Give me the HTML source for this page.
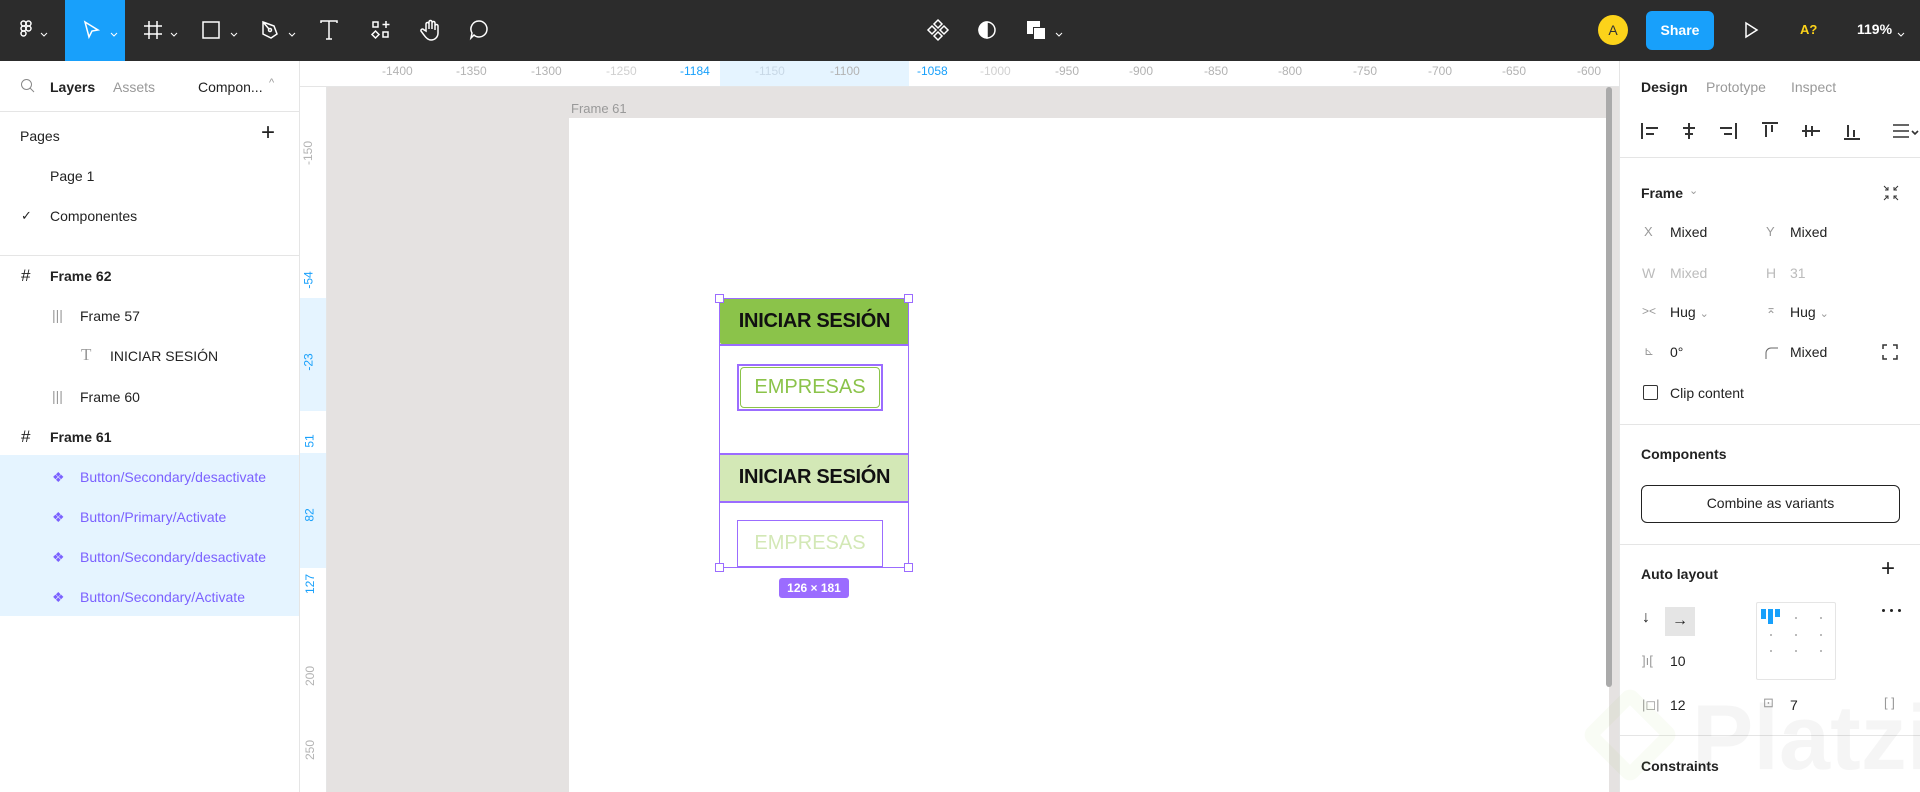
<!DOCTYPE html>
<html><head><meta charset="utf-8"><style>
*{margin:0;padding:0;box-sizing:border-box}
body{width:1920px;height:792px;overflow:hidden;position:relative;background:#e5e2e1;font-family:"Liberation Sans",sans-serif;color:#222}
.a{position:absolute;white-space:nowrap}
#top{left:0;top:0;width:1920px;height:61px;background:#2c2c2c}
.ic{position:absolute;top:18px;width:24px;height:24px}
.ic svg{width:24px;height:24px;stroke:#fff;fill:none;stroke-width:1.5}
.car{position:absolute;top:26px;width:8px;height:8px}
#left{left:0;top:61px;width:300px;height:731px;background:#fff;border-right:1px solid #e5e5e5}
#right{left:1619px;top:61px;width:301px;height:731px;background:#fff;border-left:1px solid #e5e5e5}
.t{font-size:14px}
.hr{position:absolute;height:1px;background:#e5e5e5}
.rl{font-size:12px;color:#b3b3b3}
.g{color:#999}
.dot{position:absolute;width:2px;height:2px;background:#bbb}
</style></head><body>
<div class="a" id="top">
 <div class="ic" style="left:14px"><svg viewBox="0 0 24 24"><rect x="7" y="3" width="5" height="5" rx="2.5"/><rect x="12" y="3" width="5" height="5" rx="2.5"/><rect x="7" y="8" width="5" height="5" rx="2.5"/><circle cx="14.5" cy="10.5" r="2.5"/><rect x="7" y="13" width="5" height="5" rx="2.5"/></svg></div>
 <div class="car" style="left:40px"><svg width="8" height="8"><path d="M1 2l3 3 3-3" stroke="#fff" fill="none"/></svg></div>
 <div class="a" style="left:65px;top:0;width:60px;height:61px;background:#18a0fb"></div>
 <div class="ic" style="left:79px"><svg viewBox="0 0 24 24"><path d="M6 4l13 8-6 1-3 6z"/></svg></div>
 <div class="car" style="left:110px"><svg width="8" height="8"><path d="M1 2l3 3 3-3" stroke="#fff" fill="none"/></svg></div>
 <div class="ic" style="left:141px"><svg viewBox="0 0 24 24"><path d="M8 3v18M16 3v18M3 8h18M3 16h18"/></svg></div>
 <div class="car" style="left:170px"><svg width="8" height="8"><path d="M1 2l3 3 3-3" stroke="#fff" fill="none"/></svg></div>
 <div class="ic" style="left:199px"><svg viewBox="0 0 24 24"><rect x="4" y="4" width="16" height="16"/></svg></div>
 <div class="car" style="left:230px"><svg width="8" height="8"><path d="M1 2l3 3 3-3" stroke="#fff" fill="none"/></svg></div>
 <div class="ic" style="left:258px"><svg viewBox="0 0 24 24"><path d="M5 4l11 4 3 8-6 4-8-4zM5 4l6 7"/><circle cx="12" cy="12" r="1.5"/></svg></div>
 <div class="car" style="left:288px"><svg width="8" height="8"><path d="M1 2l3 3 3-3" stroke="#fff" fill="none"/></svg></div>
 <div class="ic" style="left:317px"><svg viewBox="0 0 24 24"><path d="M4 5V3h16v2M12 3v18M9 21h6"/></svg></div>
 <div class="ic" style="left:369px"><svg viewBox="0 0 24 24"><rect x="4" y="4" width="5" height="5"/><path d="M17 3v7M13.5 6.5h7M6.5 13l3.5 3.5-3.5 3.5-3.5-3.5z"/><rect x="14" y="14" width="5" height="5"/></svg></div>
 <div class="ic" style="left:418px"><svg viewBox="0 0 24 24"><path d="M8 13V6a1.5 1.5 0 013 0v5V4a1.5 1.5 0 013 0v7V5a1.5 1.5 0 013 0v7V8a1.5 1.5 0 013 0v7c0 4-3 7-7 7-3 0-5-2-7-5l-3-4a1.5 1.5 0 012.5-1.5z"/></svg></div>
 <div class="ic" style="left:467px"><svg viewBox="0 0 24 24"><path d="M12 3a8 8 0 110 16c-2 0-4-1-5-2l-3 3 1-5a8 8 0 017-12z"/></svg></div>
 <div class="ic" style="left:926px"><svg viewBox="0 0 24 24"><path d="M12 2l4 4-4 4-4-4zM12 14l4 4-4 4-4-4zM6 8l4 4-4 4-4-4zM18 8l4 4-4 4-4-4z"/></svg></div>
 <div class="ic" style="left:975px"><svg viewBox="0 0 24 24"><circle cx="12" cy="12" r="8"/><path d="M12 4a8 8 0 000 16z" fill="#fff"/></svg></div>
 <div class="a" style="left:1027px;top:21px;width:13px;height:13px;background:#fff"></div>
 <div class="a" style="left:1033px;top:27px;width:13px;height:13px;background:#fff;border:1.5px solid #2c2c2c"></div>
 <div class="car" style="left:1055px"><svg width="8" height="8"><path d="M1 2l3 3 3-3" stroke="#fff" fill="none"/></svg></div>
 <div class="a" style="left:1598px;top:15px;width:30px;height:30px;border-radius:50%;background:#fcd31a;font-size:14px;text-align:center;line-height:30px;color:#333">A</div>
 <div class="a" style="left:1646px;top:11px;width:68px;height:39px;border-radius:6px;background:#18a0fb;color:#fff;font-size:14px;font-weight:bold;text-align:center;line-height:39px">Share</div>
 <div class="ic" style="left:1739px"><svg viewBox="0 0 24 24"><path d="M7 5l11 7-11 7z"/></svg></div>
 <div class="a" style="left:1800px;top:22px;font-size:13px;color:#fcd31a;font-weight:bold">A?</div>
 <div class="a" style="left:1857px;top:21px;font-size:14px;color:#fff;font-weight:bold">119%</div>
 <div class="car" style="left:1897px"><svg width="8" height="8"><path d="M1 2l3 3 3-3" stroke="#fff" fill="none"/></svg></div>
</div>

<div class="a" style="left:300px;top:61px;width:1319px;height:26px;background:#fff;border-bottom:1px solid #e5e5e5"></div>
<div class="a" style="left:720px;top:61px;width:189px;height:25px;background:#e5f4ff"></div>
<div class="a rl" style="left:382px;top:64px">-1400</div>
<div class="a rl" style="left:456px;top:64px">-1350</div>
<div class="a rl" style="left:531px;top:64px">-1300</div>
<div class="a rl" style="left:606px;top:64px;color:#d0d0d0">-1250</div>
<div class="a rl" style="left:680px;top:64px;color:#18a0fb">-1184</div>
<div class="a rl" style="left:755px;top:64px;color:#c8d8e6">-1150</div>
<div class="a rl" style="left:830px;top:64px">-1100</div>
<div class="a rl" style="left:917px;top:64px;color:#18a0fb">-1058</div>
<div class="a rl" style="left:980px;top:64px;color:#d0d0d0">-1000</div>
<div class="a rl" style="left:1055px;top:64px">-950</div>
<div class="a rl" style="left:1129px;top:64px">-900</div>
<div class="a rl" style="left:1204px;top:64px">-850</div>
<div class="a rl" style="left:1278px;top:64px">-800</div>
<div class="a rl" style="left:1353px;top:64px">-750</div>
<div class="a rl" style="left:1428px;top:64px">-700</div>
<div class="a rl" style="left:1502px;top:64px">-650</div>
<div class="a rl" style="left:1577px;top:64px">-600</div>
<div class="a" style="left:300px;top:87px;width:27px;height:705px;background:#fff;border-right:1px solid #e5e5e5"></div>
<div class="a" style="left:300px;top:298px;width:26px;height:113px;background:#e5f4ff"></div>
<div class="a" style="left:300px;top:453px;width:26px;height:115px;background:#e5f4ff"></div>
<div class="a rl" style="left:296px;top:146px;transform:rotate(-90deg)">-150</div>
<div class="a rl" style="left:300px;top:273px;transform:rotate(-90deg);color:#18a0fb">-54</div>
<div class="a rl" style="left:300px;top:355px;transform:rotate(-90deg);color:#18a0fb">-23</div>
<div class="a rl" style="left:303px;top:434px;transform:rotate(-90deg);color:#18a0fb">51</div>
<div class="a rl" style="left:303px;top:508px;transform:rotate(-90deg);color:#18a0fb">82</div>
<div class="a rl" style="left:300px;top:577px;transform:rotate(-90deg);color:#18a0fb">127</div>
<div class="a rl" style="left:300px;top:669px;transform:rotate(-90deg)">200</div>
<div class="a rl" style="left:300px;top:743px;transform:rotate(-90deg)">250</div>

<div class="a" style="left:571px;top:101px;font-size:13px;color:#999">Frame 61</div>
<div class="a" style="left:569px;top:118px;width:1040px;height:674px;background:#fff"></div>
<div class="a" style="left:1606px;top:87px;width:6px;height:600px;background:#aaa;border-radius:3px"></div>
<div class="a" style="left:720px;top:298px;width:189px;height:46px;background:#8bc34a;border-radius:2px"></div>
<div class="a" style="left:720px;top:298px;width:189px;height:46px;font-size:20px;font-weight:bold;text-align:center;line-height:46px;color:#111;letter-spacing:-0.3px">INICIAR SESIÓN</div>
<div class="a" style="left:737px;top:364px;width:146px;height:47px;border:2px solid #9b6cff;padding:1px"><div style="width:100%;height:100%;border:1px solid #8bc34a;border-radius:4px;font-size:20px;color:#8bc34a;text-align:center;line-height:39px">EMPRESAS</div></div>
<div class="a" style="left:720px;top:453px;width:189px;height:48px;background:#d3e8b6"></div>
<div class="a" style="left:720px;top:453px;width:189px;height:48px;font-size:20px;font-weight:bold;text-align:center;line-height:48px;color:#111;letter-spacing:-0.3px">INICIAR SESIÓN</div>
<div class="a" style="left:737px;top:520px;width:146px;height:47px;border:1.5px solid #9b6cff;font-size:20px;color:#d3e8b6;text-align:center;line-height:44px">EMPRESAS</div>
<div class="a" style="left:719px;top:298px;width:190px;height:270px;border:1.5px solid #9b6cff"></div>
<div class="a" style="left:720px;top:344px;width:189px;height:1.5px;background:#9b6cff"></div>
<div class="a" style="left:720px;top:453px;width:189px;height:1.5px;background:#9b6cff"></div>
<div class="a" style="left:720px;top:501px;width:189px;height:1.5px;background:#9b6cff"></div>
<div class="a" style="left:715px;top:294px;width:9px;height:9px;background:#fff;border:1.5px solid #9b6cff"></div>
<div class="a" style="left:904px;top:294px;width:9px;height:9px;background:#fff;border:1.5px solid #9b6cff"></div>
<div class="a" style="left:715px;top:563px;width:9px;height:9px;background:#fff;border:1.5px solid #9b6cff"></div>
<div class="a" style="left:904px;top:563px;width:9px;height:9px;background:#fff;border:1.5px solid #9b6cff"></div>
<div class="a" style="left:779px;top:578px;width:70px;height:20px;background:#9b6cff;border-radius:3px;color:#fff;font-size:12px;font-weight:bold;text-align:center;line-height:20px">126 × 181</div>

<div class="a" id="left">
 <svg class="a" style="left:20px;top:17px" width="16" height="16"><circle cx="6.5" cy="6.5" r="5" stroke="#888" fill="none"/><path d="M10 10l4 4" stroke="#888"/></svg>
 <div class="a t" style="left:50px;top:18px;font-weight:bold">Layers</div>
 <div class="a t g" style="left:113px;top:18px">Assets</div>
 <div class="a t" style="left:198px;top:18px">Compon...</div>
 <div class="a t g" style="left:269px;top:16px;font-size:11px">^</div>
 <div class="hr" style="left:0;top:50px;width:300px"></div>
 <div class="a t" style="left:20px;top:67px;font-weight:500">Pages</div>
 <div class="a" style="left:261px;top:58px;font-size:24px;font-weight:300">+</div>
 <div class="a t" style="left:50px;top:107px">Page 1</div>
 <div class="a t" style="left:21px;top:147px;font-size:13px">✓</div>
 <div class="a t" style="left:50px;top:147px">Componentes</div>
 <div class="hr" style="left:0;top:194px;width:300px"></div>
 <div class="a t" style="left:21px;top:205px;font-size:17px">#</div>
 <div class="a t" style="left:50px;top:207px;font-weight:bold">Frame 62</div>
 <div class="a t g" style="left:52px;top:246px">|||</div>
 <div class="a t" style="left:80px;top:247px">Frame 57</div>
 <div class="a" style="left:81px;top:284px;font-size:17px;color:#999;font-family:'Liberation Serif',serif">T</div>
 <div class="a t" style="left:110px;top:287px">INICIAR SESIÓN</div>
 <div class="a t g" style="left:52px;top:327px">|||</div>
 <div class="a t" style="left:80px;top:328px">Frame 60</div>
 <div class="a t" style="left:21px;top:366px;font-size:17px">#</div>
 <div class="a t" style="left:50px;top:368px;font-weight:bold">Frame 61</div>
 <div class="a" style="left:0;top:394px;width:299px;height:161px;background:#e5f4ff"></div>
 <div class="a t" style="left:52px;top:408px;color:#7b61ff">❖</div><div class="a t" style="left:80px;top:408px;color:#7b61ff">Button/Secondary/desactivate</div>
 <div class="a t" style="left:52px;top:448px;color:#7b61ff">❖</div><div class="a t" style="left:80px;top:448px;color:#7b61ff">Button/Primary/Activate</div>
 <div class="a t" style="left:52px;top:488px;color:#7b61ff">❖</div><div class="a t" style="left:80px;top:488px;color:#7b61ff">Button/Secondary/desactivate</div>
 <div class="a t" style="left:52px;top:528px;color:#7b61ff">❖</div><div class="a t" style="left:80px;top:528px;color:#7b61ff">Button/Secondary/Activate</div>
</div>

<div class="a" id="right">
 <div class="a t" style="left:21px;top:18px;font-weight:bold">Design</div>
 <div class="a t g" style="left:86px;top:18px">Prototype</div>
 <div class="a t g" style="left:171px;top:18px">Inspect</div>
 <svg class="a" style="left:20px;top:58px" width="280" height="24" stroke="#333" stroke-width="2" fill="none">
  <path d="M2 4v16M6 9h12M6 15h8"/>
  <path d="M49 4v16M43 9h12M45 15h8"/>
  <path d="M96 4v16M80 9h12M84 15h8"/>
  <path d="M122 4h16M126 6v12M132 6v7"/>
  <path d="M162 12h18M166 6v12M172 7v10"/>
  <path d="M204 20h16M208 6v12M214 11v7"/>
  <path d="M253 6h16M253 12h16M253 18h16M272 12l3 3 3-3" stroke-width="1.6"/>
 </svg>
 <div class="hr" style="left:0;top:96px;width:301px"></div>
 <div class="a t" style="left:21px;top:124px;font-weight:bold">Frame</div>
 <div class="a g" style="left:69px;top:123px;font-size:11px">⌄</div>
 <svg class="a" style="left:262px;top:123px" width="18" height="18" stroke="#333" fill="none"><path d="M2 2l4 4M6 3v3H3M16 2l-4 4M12 3v3h3M2 16l4-4M3 12h3v3M16 16l-4-4M15 12h-3v3"/></svg>
 <div class="a t g" style="left:24px;top:163px;font-size:13px">X</div><div class="a t" style="left:50px;top:163px">Mixed</div>
 <div class="a t g" style="left:146px;top:163px;font-size:13px">Y</div><div class="a t" style="left:170px;top:163px">Mixed</div>
 <div class="a t" style="left:22px;top:204px;color:#bbb">W</div><div class="a t" style="left:50px;top:204px;color:#bbb">Mixed</div>
 <div class="a t" style="left:146px;top:204px;color:#bbb">H</div><div class="a t" style="left:170px;top:204px;color:#bbb">31</div>
 <div class="a t g" style="left:22px;top:243px;font-size:12px">&gt;&lt;</div><div class="a t" style="left:50px;top:243px">Hug <span class="g" style="font-size:11px">⌄</span></div>
 <div class="a t g" style="left:146px;top:241px;font-size:12px">⌅</div><div class="a t" style="left:170px;top:243px">Hug <span class="g" style="font-size:11px">⌄</span></div>
 <div class="a t g" style="left:24px;top:283px;font-size:12px">⊾</div><div class="a t" style="left:50px;top:283px">0°</div>
 <svg class="a" style="left:144px;top:284px" width="16" height="16" stroke="#666" fill="none"><path d="M2 14V8a5 5 0 015-5h7"/></svg>
 <div class="a t" style="left:170px;top:283px">Mixed</div>
 <svg class="a" style="left:262px;top:283px" width="16" height="16" stroke="#333" stroke-width="1.5" fill="none"><path d="M1 5V1h4M11 1h4v4M15 11v4h-4M5 15H1v-4"/></svg>
 <div class="a" style="left:23px;top:324px;width:15px;height:15px;border:1.5px solid #333;border-radius:2px"></div>
 <div class="a t" style="left:50px;top:324px">Clip content</div>
 <div class="hr" style="left:0;top:363px;width:301px"></div>
 <div class="a t" style="left:21px;top:385px;font-weight:bold">Components</div>
 <div class="a" style="left:21px;top:424px;width:259px;height:38px;border:1.5px solid #222;border-radius:6px;font-size:14px;text-align:center;line-height:35px">Combine as variants</div>
 <div class="hr" style="left:0;top:483px;width:301px"></div>
 <div class="a t" style="left:21px;top:505px;font-weight:bold">Auto layout</div>
 <div class="a" style="left:261px;top:494px;font-size:24px;font-weight:300">+</div>
 <div class="a" style="left:22px;top:548px;font-size:16px">↓</div>
 <div class="a" style="left:45px;top:546px;width:30px;height:29px;background:#e5e5e5;font-size:16px;text-align:center;line-height:28px">→</div>
 <div class="a" style="left:136px;top:541px;width:80px;height:78px;border:1px solid #e5e5e5;border-radius:2px"></div>
 <div class="a" style="left:141px;top:548px;width:5px;height:10px;background:#18a0fb"></div>
 <div class="a" style="left:148px;top:548px;width:5px;height:15px;background:#18a0fb"></div>
 <div class="a" style="left:155px;top:548px;width:5px;height:8px;background:#18a0fb"></div>
 <div class="dot" style="left:175px;top:556px"></div><div class="dot" style="left:200px;top:556px"></div>
 <div class="dot" style="left:150px;top:573px"></div><div class="dot" style="left:175px;top:573px"></div><div class="dot" style="left:200px;top:573px"></div>
 <div class="dot" style="left:150px;top:589px"></div><div class="dot" style="left:175px;top:589px"></div><div class="dot" style="left:200px;top:589px"></div>
 <div class="a" style="left:262px;top:547px;width:20px;height:6px;font-size:0">
  <span style="position:absolute;left:0;top:1px;width:3px;height:3px;background:#222;border-radius:50%"></span>
  <span style="position:absolute;left:8px;top:1px;width:3px;height:3px;background:#222;border-radius:50%"></span>
  <span style="position:absolute;left:16px;top:1px;width:3px;height:3px;background:#222;border-radius:50%"></span>
 </div>
 <div class="a t g" style="left:22px;top:592px;font-size:13px">]ı[</div><div class="a t" style="left:50px;top:592px">10</div>
 <div class="a t g" style="left:22px;top:636px;font-size:13px">|◻|</div><div class="a t" style="left:50px;top:636px">12</div>
 <div class="a t g" style="left:143px;top:634px;font-size:13px">⊡</div><div class="a t" style="left:170px;top:636px">7</div>
 <div class="a t g" style="left:264px;top:634px;font-size:13px">[ ]</div>
 <div class="hr" style="left:0;top:674px;width:301px"></div>
 <div class="a t" style="left:21px;top:697px;font-weight:bold">Constraints</div>
</div>
<div class="a" style="left:1692px;top:686px;font-size:92px;font-weight:bold;color:rgba(0,0,0,0.04)">Platzi</div>
<div class="a" style="left:1595px;top:700px;width:70px;height:70px;border:14px solid rgba(150,200,80,0.06);transform:rotate(45deg);border-radius:10px"></div>
</body></html>
